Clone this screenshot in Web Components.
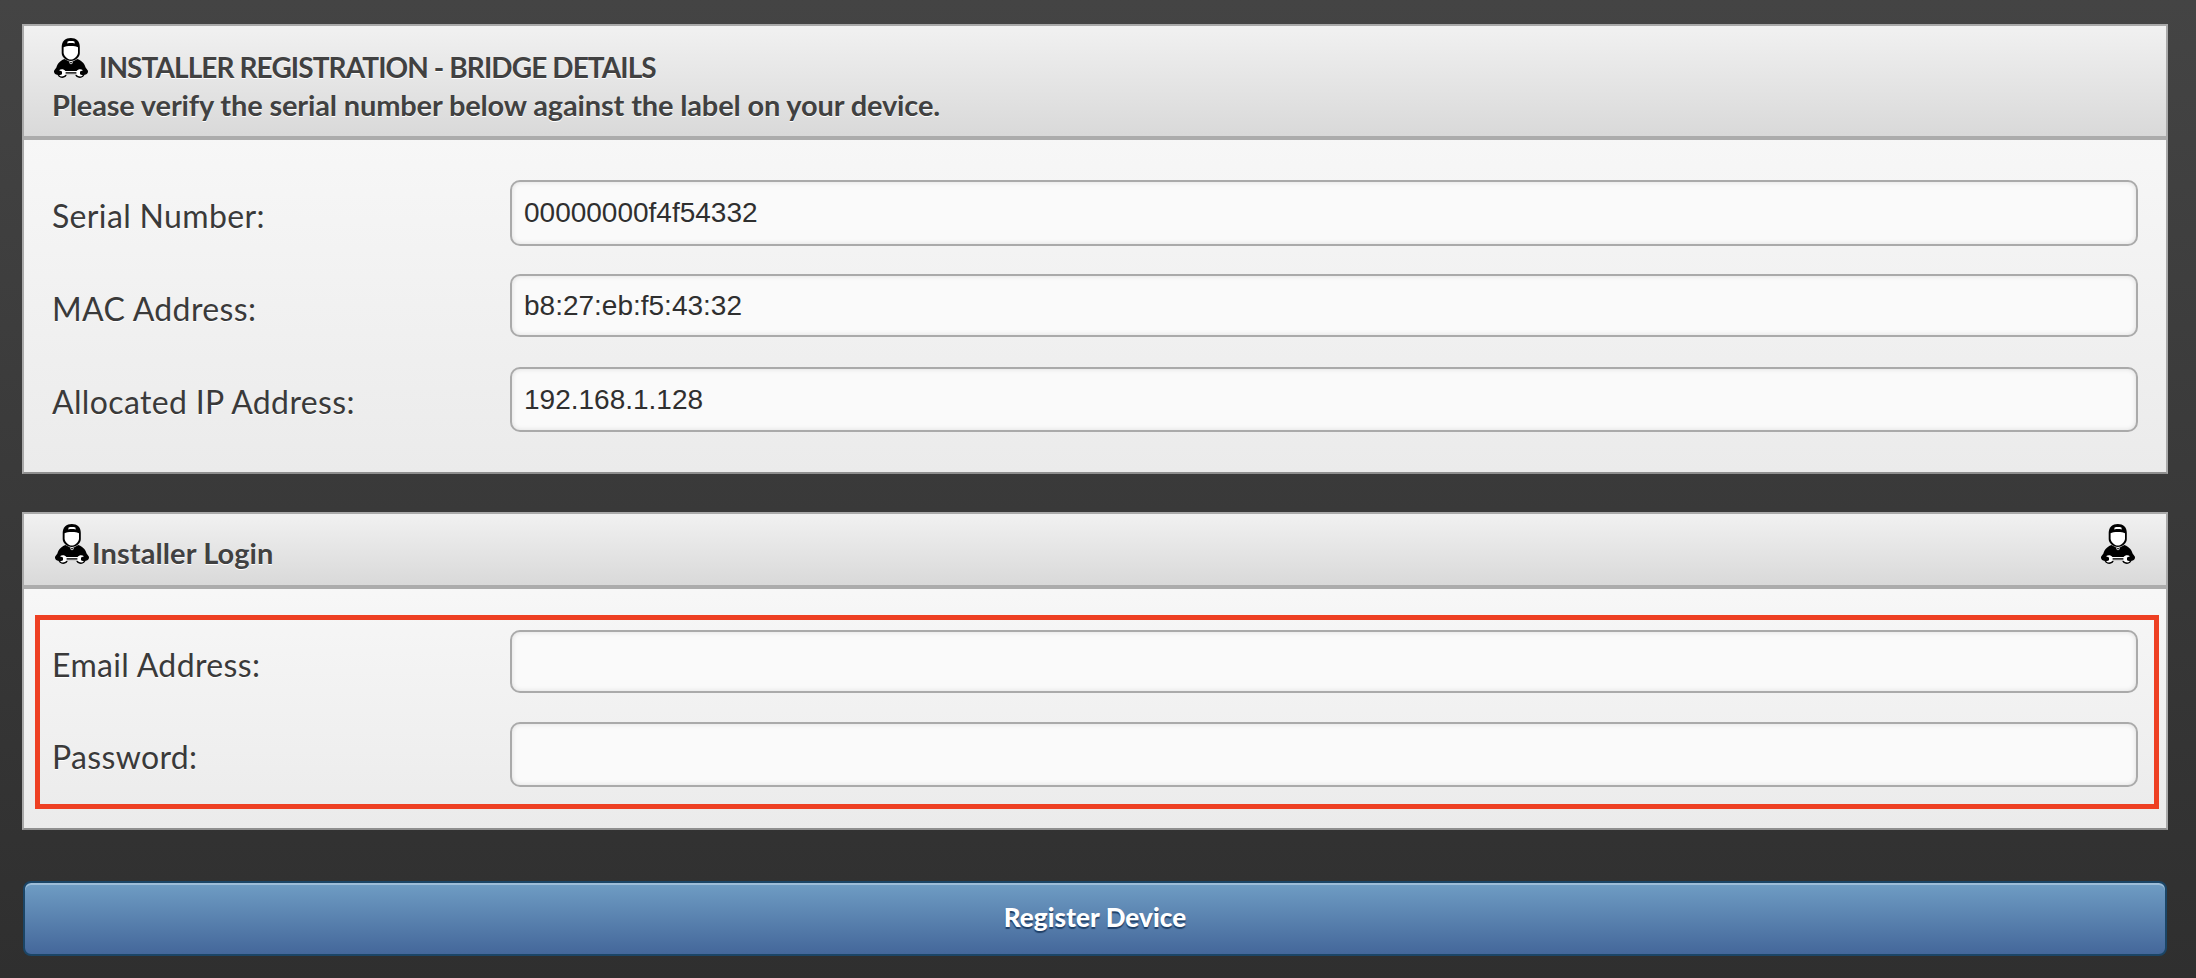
<!DOCTYPE html>
<html>
<head>
<meta charset="utf-8">
<title>Installer Registration</title>
<style>
    html, body { margin: 0; height: 100%; }
    body {
        box-sizing: border-box;
        min-height: 978px;
        padding: 24px 28px 0 22px;
        overflow: hidden;
        background: linear-gradient(#444444, #2f2f2f);
        font-family: "Lato", "Noto Sans", sans-serif;
    }
</style>
</head>
<body>

<template id="installer-icon-tpl">
    <style>
        :host { display: inline-block; width: 34px; height: 40px; line-height: 0; }
        svg { width: 100%; height: 100%; display: block; }
    </style>
    <svg viewBox="0 0 34 40" aria-hidden="true">
        <path fill="#000" d="M7.7 9C7.7 3 11.5 0 16.8 0S25.8 3 25.8 9V15C25.8 19 21.5 23 16.8 23S7.7 19 7.7 15Z"/>
        <path fill="#fff" d="M9.6 9.2C12 7.6 21.5 7.6 24 9.2V14.5C24 18 20 21.6 16.8 21.6S9.6 18 9.6 14.5Z"/>
        <path fill="#fff" d="M13.6 3.4C15.5 2.8 18.5 2.8 20.4 3.4L20.8 5.4C18.5 4.9 15.5 4.9 13.2 5.4Z"/>
        <path fill="#000" d="M10.4 21C5.4 23 3.4 26 2.4 29.6L0.2 32.4C-0.4 34 0.3 36.4 3 36.8H31C33.7 36.4 34.4 34 33.8 32.4L31.6 29.6C30.6 26 28.6 23 23.4 21L17 24.6Z"/>
        <circle cx="8.2" cy="35" r="5" fill="#000"/>
        <circle cx="25.8" cy="35" r="5" fill="#000"/>
        <path fill="#fff" d="M5 32.2C7 30.8 10 31 11.4 33H22.6C24 31 27 30.8 29 32.2L26 33.6V36.2L29 37.6C27 39 24 38.8 22.6 36.8H11.4C10 38.8 7 39 5 37.6L8 36.2V33.6Z"/>
        <path fill="#000" d="M11.6 34.2H22.4V35.6H11.6Z"/>
        <path fill="none" stroke="#fff" stroke-width="0.8" d="M15 24.4L17 26L19 24.4"/>
    </svg>
</template>

<template id="info-panel-tpl">
    <style>
        :host {
            display: block;
            border: 2px solid #a9a9a9;
            border-bottom-color: #8f8f8f;
            margin-bottom: var(--panel-gap, 0);
            background: linear-gradient(#fbfbfb, #ebebeb);
        }
        .head {
            box-sizing: border-box;
            height: var(--head-height, 114px);
            border-bottom: 4px solid #acacac;
            background: linear-gradient(#f1f1f1, #d9d9d9);
            color: #414141;
            text-shadow: 0 1px 0 #fff;
            font-weight: 700;
        }
        .body { padding: var(--body-padding, 0); }
    </style>
    <div class="head"><slot name="head"></slot></div>
    <div class="body"><slot></slot></div>
</template>

<template id="form-row-tpl">
    <style>
        :host {
            display: grid;
            grid-template-columns: 458px 1fr;
            align-items: center;
            height: var(--row-height, 64px);
            margin-bottom: var(--row-gap, 0);
            color: #3a3a3a;
        }
        .label {
            font-size: 32px;
            font-weight: 400;
            letter-spacing: 0.35px;
            padding-top: var(--label-shift, 4px);
            text-shadow: 0 1px 0 #fff;
        }
        .field {
            box-sizing: border-box;
            height: 100%;
            display: flex;
            align-items: center;
            padding: 0 12px;
            border: 2px solid #aaaaaa;
            border-radius: 10px;
            background: #fafafa;
            box-shadow: inset 0 0 5px rgba(0, 0, 0, .12);
            font: 28px "Liberation Sans", Arial, sans-serif;
            color: #2f2f2f;
        }
    </style>
    <div class="label"><slot name="label"></slot></div>
    <div class="field"><slot></slot></div>
</template>

<template id="submit-button-tpl">
    <style>
        :host {
            display: flex;
            align-items: center;
            justify-content: center;
            box-sizing: border-box;
            height: 75px;
            margin: 0 1px;
            padding-bottom: 4px;
            border: 2px solid #1b4566;
            border-radius: 8px;
            background: linear-gradient(#6f9dc4, #44679a);
            box-shadow: inset 0 2px 0 #9dbdd8;
            color: #fff;
            font-size: 26px;
            font-weight: 900;
            letter-spacing: 0.1px;
            text-shadow: 0 2px 1px #1f3f66;
            cursor: pointer;
        }
    </style>
    <slot></slot>
</template>

<template id="highlight-box-tpl">
    <style>
        :host {
            display: block;
            border: 5px solid #ee4023;
            padding: 10px 16px 17px 12px;
        }
    </style>
    <slot></slot>
</template>

<installer-panel style="--head-height:114px; --body-padding:40px 28px 40px; --panel-gap:38px">
    <div slot="head" style="padding:12px 0 0 28px">
        <div style="display:flex; align-items:flex-end; height:40px; font-size:28px; line-height:29px; letter-spacing:-0.9px">
            <installer-icon style="margin:0 11px 0 2px"></installer-icon>
            <span style="position:relative; top:4px">INSTALLER REGISTRATION - BRIDGE DETAILS</span>
        </div>
        <div style="font-size:29px; line-height:34px; margin-top:10px; letter-spacing:-0.15px">Please verify the serial number below against the label on your device.</div>
    </div>
    <form-row style="--row-height:66px; --row-gap:28px"><span slot="label">Serial Number:</span>00000000f4f54332</form-row>
    <form-row style="--row-height:63px; --row-gap:30px; --label-shift:6px"><span slot="label">MAC Address:</span>b8:27:eb:f5:43:32</form-row>
    <form-row style="--row-height:65px"><span slot="label">Allocated IP Address:</span>192.168.1.128</form-row>
</installer-panel>

<installer-panel style="--head-height:75px; --body-padding:26px 7px 19px 11px; --panel-gap:51px">
    <div slot="head" style="display:flex; align-items:flex-start; justify-content:space-between; padding:10px 31px 0 31px">
        <div style="display:flex; align-items:flex-end; height:40px; font-size:29px; line-height:29px; letter-spacing:0.1px">
            <installer-icon style="margin-right:3px"></installer-icon>
            <span style="position:relative; top:3px">Installer Login</span>
        </div>
        <installer-icon></installer-icon>
    </div>
    <highlight-box>
        <form-row style="--row-height:63px; --row-gap:29px; --label-shift:6px"><span slot="label">Email Address:</span></form-row>
        <form-row style="--row-height:65px"><span slot="label">Password:</span></form-row>
    </highlight-box>
</installer-panel>

<submit-button>Register Device</submit-button>

<script>
    // 템플릿을 복제해서 shadow root 에 붙이는 공통 베이스
    class TemplateElement extends HTMLElement {
        constructor(tplId) {
            super();
            let shadowRoot = this.attachShadow({mode: 'open'});
            shadowRoot.appendChild(document.getElementById(tplId).content.cloneNode(true));
        }
    }

    class InstallerIcon extends TemplateElement {
        constructor() { super('installer-icon-tpl'); }
    }

    class InstallerPanel extends TemplateElement {
        constructor() { super('info-panel-tpl'); }
    }

    class FormRow extends TemplateElement {
        constructor() { super('form-row-tpl'); }
    }

    class HighlightBox extends TemplateElement {
        constructor() { super('highlight-box-tpl'); }
    }

    class SubmitButton extends TemplateElement {
        constructor() { super('submit-button-tpl'); }

        connectedCallback() {
            this.setAttribute('role', 'button');
            this.setAttribute('tabindex', 0);
        }
    }

    customElements.define('installer-icon', InstallerIcon);
    customElements.define('installer-panel', InstallerPanel);
    customElements.define('form-row', FormRow);
    customElements.define('highlight-box', HighlightBox);
    customElements.define('submit-button', SubmitButton);
</script>
</body>
</html>
